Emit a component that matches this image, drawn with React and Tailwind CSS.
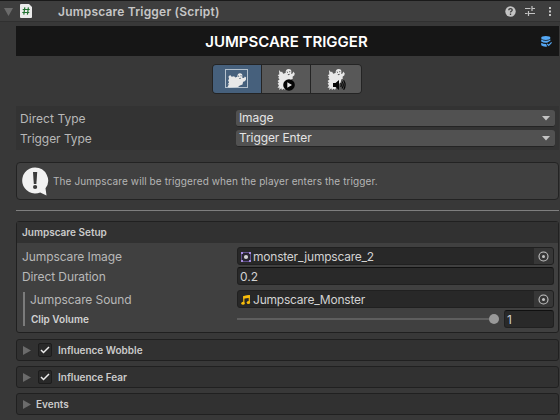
import { useState } from 'react';
import clsx from 'clsx';

const Ghost = () => (
  <svg width="20" height="23" viewBox="0 0 20 23">
    <path
      d="M3 2l2 2.200 1-.6L7.200 5.800l2.400-.8C9.500 2.400 10.600.9 12.700.9c1.900 0 2.900 1.200 2.700 3.200l-.3 2 1.700-.8.2-1.800 1.700 1.800-.3 2-1.800 1.400.2 2-1.700.8-.3 2.800-1.600 1.500-.3 3.500-2.700.4-1.200 2-1.500-1-1.500 1.300-.7-1.700L3.200 22l.3-2.500-2 .6 1.500-2.800-1.400-1.600 1.300-1.200-1.300-1.600 2-1.700-1.600-1.500L3.300 9 1.600 6.900l1.700-.5z"
      fill="#e8e8e8"
    />
    <path d="M10.600 3.400l1.500.5-.8 1.200zM13.100 3.300l1.300-.3-.5 1.600zM11.400 6.400l2.600-.6-1.100 1.500z" fill="#3c3c3c" />
  </svg>
);

const ImageGhostIcon = () => (
  <svg width="24" height="20" viewBox="0 0 24 20">
    <rect x="0.5" y="0.5" width="22" height="18" fill="none" stroke="#b3c0cc" />
    <path
      d="M3.400 7.800l1.700-1.800 1.600 1.800 2.400-.6 1.200 1.300 2.100-.8C12.300 5.500 13.200 4.300 14.900 4.300c1.700 0 2.600 1 2.500 2.500l-.2 2 1.800.3.800-1.600 1.300.9-.2 2.500-1.600 1.600-1.200.3-.6 2.700-2.700.9-1.800 1.700-9 .4-1.500-1 1.800-2.200-1.700.2 1.500-2.300-1-1.800 1-1.600z"
      fill="#e8e8e8"
    />
    <path d="M12.900 6.400l1.500.5-.8 1.200zM15.300 6.400l1.300-.2-.5 1.500zM13.800 9.200l2.400-.5-1.100 1.400z" fill="#33475b" />
  </svg>
);

const PlayBadge = () => (
  <svg width="12" height="12" viewBox="0 0 12 12" className="absolute top-[11px] left-[7px]">
    <circle cx="6" cy="6" r="5.800" fill="#050505" />
    <path d="M4.300 3.200v5.600L9 6z" fill="#e6e6e6" />
  </svg>
);

const SoundBadge = () => (
  <svg width="13" height="12" viewBox="0 0 13 12" className="absolute top-[11px] left-[7px]">
    <path d="M0 4h2.500L6 1v10L2.500 8H0z" fill="#050505" />
    <path d="M7.700 4q1.200 2 0 4M9 2.500q2.500 3.500 0 7M10.600 1.200q3 4.800 0 9.600" fill="none" stroke="#050505" strokeWidth="1.200" />
  </svg>
);

const Foldout = ({ open }) =>
  open ? (
    <svg width="9" height="8" viewBox="0 0 9 8" className="mt-px shrink-0">
      <path d="M0 0h9L4.500 8z" fill="#6b6b6b" />
    </svg>
  ) : (
    <svg width="8" height="9" viewBox="0 0 8 9" className="shrink-0">
      <path d="M0 0v9l8-4.500z" fill="#6b6b6b" />
    </svg>
  );

const Dropdown = ({ value }) => (
  <button className="flex h-[17px] w-[319px] items-center justify-between rounded-[3px] border-b border-b-[#242424] bg-[#515151] pr-[5px] pl-[3px] text-[12px] leading-[16px] tracking-[-0.1px] text-[#e4e4e4]">
    <span>{value}</span>
    <svg width="8" height="5" viewBox="0 0 8 5">
      <path d="M0 0h8L4 4.500z" fill="#c4c4c4" />
    </svg>
  </button>
);

const Row = ({ label, children, className, labelClassName = 'pt-px leading-[18px] tracking-[-0.1px]' }) => (
  <div className={clsx('flex items-start justify-between text-[12px] text-[#b8b8b8]', className)}>
    <span className={labelClassName}>{label}</span>
    {children}
  </div>
);

const ObjectField = ({ icon, value }) => (
  <div className="flex h-[18px] w-[317px] overflow-hidden rounded-[3px] border border-[#202020] bg-[#282828]">
    <div className="flex flex-1 items-center pl-[3px] text-[12px] leading-[17px] tracking-[-0.22px] text-[#d2d2d2]">
      {icon}
      <span className="ml-[2px] pt-px">{value}</span>
    </div>
    <button className="flex w-[19px] items-center justify-center bg-[#373737]">
      <svg width="11" height="11" viewBox="0 0 11 11">
        <circle cx="5.5" cy="5.5" r="4.500" fill="none" stroke="#c4c4c4" strokeWidth="1.100" />
        <circle cx="5.5" cy="5.5" r="1.500" fill="#c4c4c4" />
      </svg>
    </button>
  </div>
);

const SpriteIcon = () => (
  <svg width="10" height="10" viewBox="0 0 10 10" className="mt-px">
    <rect x="0.5" y="0.5" width="9" height="9" fill="#292532" stroke="#62518b" />
    <path d="M0 0h2v2H0zM8 0h2v2H8zM0 8h2v2H0zM8 8h2v2H8z" fill="#a78ce0" />
    <circle cx="5" cy="5" r="2.100" fill="#d5d5d5" />
  </svg>
);

const MusicIcon = () => (
  <svg width="10" height="10" viewBox="0 0 10 10" className="mt-px">
    <path d="M2.800 8V1.700L8.300.8v6.200" fill="none" stroke="#f8bc0b" strokeWidth="1.200" />
    <path d="M2.300.9L8.900 0v2.800l-6.600.9z" fill="#f8bc0b" />
    <ellipse cx="2" cy="8.300" rx="1.700" ry="1.500" fill="#f8bc0b" />
    <ellipse cx="7.400" cy="7.500" rx="1.700" ry="1.500" fill="#f8bc0b" />
  </svg>
);

const FoldoutPanel = ({ title, toggle }) => {
  const [checked, setChecked] = useState(true);

  return (
    <div className="flex h-[22px] items-center rounded-[3px] border border-[#202020] bg-[#313131] pl-[6px]">
      <Foldout />
      {toggle && (
        <button
          onClick={() => setChecked(!checked)}
          className="ml-[7px] flex h-[14px] w-[14px] items-center justify-center rounded-[2px] border border-[#1c1c1c] bg-[#292929]"
        >
          {checked && (
            <svg width="10" height="8" viewBox="0 0 10 8">
              <path d="M1 4l2.500 2.500L9 1" fill="none" stroke="#ededed" strokeWidth="1.500" />
            </svg>
          )}
        </button>
      )}
      <span className={clsx('text-[10px] font-semibold text-[#cbcbcb]', toggle ? 'ml-[6px]' : 'ml-[5px]')}>
        {title}
      </span>
    </div>
  );
};

const tabs = [
  { id: 'image', width: 'w-[48px]', icon: <ImageGhostIcon /> },
  {
    id: 'model',
    width: 'w-[48px]',
    icon: (
      <div className="relative h-[23px] w-[20px]">
        <Ghost />
        <PlayBadge />
      </div>
    ),
  },
  {
    id: 'audio',
    width: 'w-[50px]',
    icon: (
      <div className="relative h-[23px] w-[20px]">
        <Ghost />
        <SoundBadge />
      </div>
    ),
  },
];

export default function App() {
  const [activeTab, setActiveTab] = useState('image');

  return (
    <div className="h-[420px] w-[560px] overflow-hidden bg-[#383838] font-['Inter',sans-serif] whitespace-nowrap">
      {/* Component header */}
      <header className="flex h-[22px] items-center border-t border-b border-t-[#1a1a1a] border-b-[#303030] bg-[#3e3e3e] pr-[8px] pl-[4px]">
        <Foldout open />
        <svg width="12" height="14" viewBox="0 0 12 14" className="ml-[7px]">
          <path d="M1 0h8l3 3v10q0 1-1 1H1q-1 0-1-1V1q0-1 1-1z" fill="#ececec" />
          <path d="M4.800 3.300l-1 7.400M8.400 3.300l-1 7.400M2.700 5.500h7M2.300 8.500h7" stroke="#247334" strokeWidth="1.200" />
        </svg>
        <h1 className="ml-[26px] pt-px text-[12px] font-semibold tracking-[0.2px] text-[#c6c6c6]">Jumpscare Trigger (Script)</h1>
        <div className="ml-auto flex items-center">
          <svg width="11" height="11" viewBox="0 0 11 11">
            <circle cx="5.5" cy="5.5" r="5.200" fill="#c4c4c4" />
            <path d="M3.800 4.300q0-1.700 1.700-1.700t1.700 1.500q0 .8-1 1.300-.7.400-.7 1.200M5.500 7.600v1.300" fill="none" stroke="#3e3e3e" strokeWidth="1.300" />
          </svg>
          <svg width="10" height="10" viewBox="0 0 10 10" className="ml-[9px]">
            <path d="M0 2.500h5.500M7 2.500h3M7 0v5M0 7.500h2.500M4 7.500h6M3.500 5v5" stroke="#c4c4c4" strokeWidth="1.200" />
          </svg>
          <svg width="3" height="11" viewBox="0 0 3 11" className="ml-[14px]">
            <path d="M0 1h2v2H0zM0 4.500h2v2H0zM0 8h2v2H0z" fill="#c4c4c4" />
          </svg>
        </div>
      </header>

      <main className="mt-[4px] mr-px ml-[16px]">
        {/* Title bar */}
        <div className="flex h-[30px] items-center bg-[#161616]">
          <h2 className="ml-[28px] flex-1 pt-[2px] text-center text-[15px] font-semibold text-white">JUMPSCARE TRIGGER</h2>
          <svg width="11" height="11" viewBox="0 0 11 11" className="mr-[7px] ml-[12px]">
            <ellipse cx="4.800" cy="2" rx="4.600" ry="1.900" fill="#55a8f5" />
            <path d="M.2 3.500q4.600 2.500 9.200 0v1.300L6 6.700Q2.500 7 .2 5.400zM.2 6.700Q2.200 8 5 8l1.200 2.600Q2 11 .2 9.300z" fill="#55a8f5" />
            <path d="M6 7.800l1.700 1.700L10.600 6.400" fill="none" stroke="#55a8f5" strokeWidth="1.200" />
          </svg>
        </div>

        {/* Jumpscare type tabs */}
        <div className="mt-[8px] ml-[196px] flex h-[30px] w-[150px] gap-px overflow-hidden rounded-[4px] border border-[#242424] bg-[#242424]">
          {tabs.map((tab) => (
            <button
              key={tab.id}
              onClick={() => setActiveTab(tab.id)}
              className={clsx('flex items-center justify-center', tab.width, activeTab === tab.id ? 'bg-[#46607c]' : 'bg-[#585858]')}
            >
              {tab.icon}
            </button>
          ))}
        </div>

        <section className="mt-[12px] flex h-[44px] flex-col gap-[3px] bg-[#333333] pt-[4px] pr-[4px] pl-[4px]">
          <Row label="Direct Type" className="h-[17px]" labelClassName="leading-[17px] tracking-[0.05px]">
            <Dropdown value="Image" />
          </Row>
          <Row label="Trigger Type" className="h-[17px]" labelClassName="leading-[17px] tracking-[-0.05px]">
            <Dropdown value="Trigger Enter" />
          </Row>
        </section>

        {/* Help box */}
        <div className="mt-[12px] flex h-[38px] items-center rounded-[4px] border border-[#232323] bg-[#404040] pl-[5px]">
          <svg width="27" height="29" viewBox="0 0 27 29">
            <path d="M13 .5a13 13 0 1 0 5.200 25l6.300 3-1-7.200A13 13 0 0 0 13 .5z" fill="#f2f2f2" />
            <path d="M11 5h4.200l-.8 12h-2.600z" fill="#3c3c3c" />
            <circle cx="13.100" cy="20" r="2.100" fill="#3c3c3c" />
          </svg>
          <p className="ml-[4px] pt-px text-[10px] tracking-[0.1px] text-[#b5b5b5]">
            The Jumpscare will be triggered when the player enters the trigger.
          </p>
        </div>

        <div className="mt-[10px] h-px bg-[#7f7f7f]" />

        <section className="mt-[10px] h-[112px] rounded-[3px] border border-[#202020] bg-[#404040]">
          <h3 className="flex h-[21px] items-center bg-[#313131] pl-[5px] text-[10px] font-semibold text-[#cbcbcb]">
            Jumpscare Setup
          </h3>
          <div className="pt-[4px] pr-[4px] pl-[5px]">
            <Row label="Jumpscare Image" className="h-[18px]">
              <ObjectField icon={<SpriteIcon />} value="monster_jumpscare_2" />
            </Row>
            <Row label="Direct Duration" className="mt-[2px] h-[18px]">
              <div className="h-[18px] w-[317px] rounded-[3px] border border-[#202020] border-t-[#101010] bg-[#292929] pl-[2px] leading-[17px] text-[#d2d2d2]">
                0.2
              </div>
            </Row>
            <div className="mt-[5px] flex">
              <div className="mt-[2px] ml-px h-[34px] w-[2px] bg-[#7b7b7b]" />
              <div className="ml-[5px] flex-1">
                <Row label="Jumpscare Sound" className="h-[18px]">
                  <ObjectField icon={<MusicIcon />} value="Jumpscare_Monster" />
                </Row>
                <div className="mt-[2px] flex h-[18px] items-center justify-between">
                  <span className="ml-px text-[10px] font-semibold text-[#d2d2d2]">Clip Volume</span>
                  <div className="flex w-[317px] items-center">
                    <div className="h-[2px] w-[252px] bg-[#5e5e5e]" />
                    <div className="h-[10px] w-[10px] rounded-full bg-[#999999]" />
                    <div className="ml-auto h-[18px] w-[50px] rounded-[3px] border border-[#202020] border-t-[#101010] bg-[#292929] pl-[2px] text-[12px] leading-[17px] text-[#d2d2d2]">
                      1
                    </div>
                  </div>
                </div>
              </div>
            </div>
          </div>
        </section>

        <div className="mt-[6px] flex flex-col gap-[5px]">
          <FoldoutPanel title="Influence Wobble" toggle />
          <FoldoutPanel title="Influence Fear" toggle />
          <FoldoutPanel title="Events" />
        </div>
      </main>
    </div>
  );
}
